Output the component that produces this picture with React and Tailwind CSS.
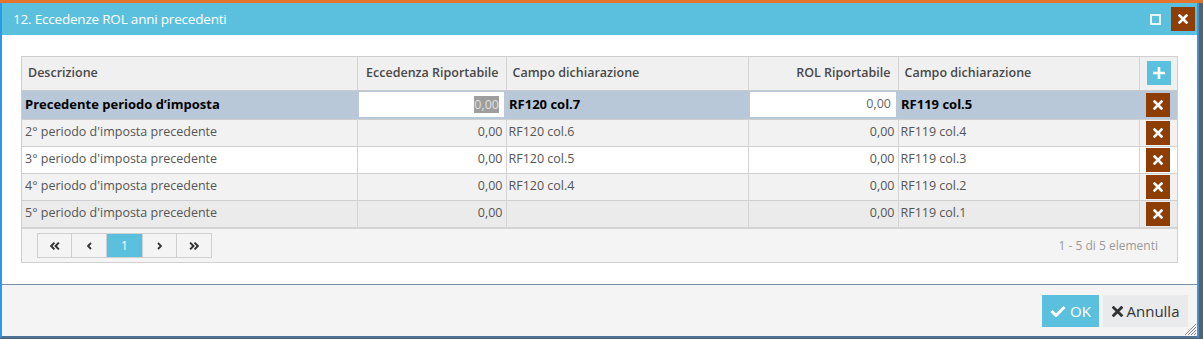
const rows = [
  { desc: "2° periodo d'imposta precedente", ecc: '0,00', c1: 'RF120 col.6', rol: '0,00', c2: 'RF119 col.4', bg: 'bg-[#f2f2f2]' },
  { desc: "3° periodo d'imposta precedente", ecc: '0,00', c1: 'RF120 col.5', rol: '0,00', c2: 'RF119 col.3', bg: 'bg-white' },
  { desc: "4° periodo d'imposta precedente", ecc: '0,00', c1: 'RF120 col.4', rol: '0,00', c2: 'RF119 col.2', bg: 'bg-[#f2f2f2]' },
  { desc: "5° periodo d'imposta precedente", ecc: '0,00', c1: '', rol: '0,00', c2: 'RF119 col.1', bg: 'bg-[#ebebeb]' },
];

function XIcon({ className = 'w-[10px] h-[10px]', color = 'white' }) {
  return (
    <svg viewBox="0 0 10 10" className={className}>
      <path d="M1.5 1.5 L8.5 8.5 M8.5 1.5 L1.5 8.5" stroke={color} strokeWidth="2.6" strokeLinecap="square" />
    </svg>
  );
}

function DelBtn() {
  return (
    <div className="w-6 h-6 bg-[#8e3d04] flex items-center justify-center mx-auto">
      <XIcon />
    </div>
  );
}

function Chevron({ dir, double }) {
  const one = dir === 'left' ? 'M4 0.5 L1 3.5 L4 6.5' : 'M1 0.5 L4 3.5 L1 6.5';
  const two = dir === 'left' ? 'M8 0.5 L5 3.5 L8 6.5' : 'M5 0.5 L8 3.5 L5 6.5';
  return (
    <svg viewBox={double ? '0 0 9 7' : '0 0 5 7'} className={double ? 'w-[10px] h-[8px]' : 'w-[5px] h-[8px]'}>
      <path d={one} stroke="#333" strokeWidth="1.8" fill="none" />
      {double && <path d={two} stroke="#333" strokeWidth="1.8" fill="none" />}
    </svg>
  );
}

export default function App() {
  return (
    <div className="w-[1203px] h-[339px] bg-[#4f6470] overflow-hidden font-['Open_Sans',sans-serif] relative">
      <div className="h-[3px] bg-[#e4732c]" />
      <div className="w-[1199px] h-[335px] flex flex-col border-l-2 border-r-2 border-b-2 border-l-[#2d97f0] border-r-[#4f8fc9] border-b-[#4e7396] bg-white relative">
        {/* title bar */}
        <div className="h-[32px] bg-[#5bc0de] flex items-center pl-[11px] pr-[2px] shrink-0">
          <span className="text-white text-[13.5px] tracking-[-0.2px] flex-1">12. Eccedenze ROL anni precedenti</span>
          <div className="w-[11px] h-[11px] border-2 border-[#e8f6fb] mr-[10px]" />
          <div className="w-6 h-6 bg-[#8e3d04] flex items-center justify-center">
            <XIcon />
          </div>
        </div>

        {/* body */}
        <div className="flex-1 pt-[21px] pl-[19px] pr-[19px]">
          <div className="border border-[#cfcfcf] w-[1157px]">
            <table className="table-fixed border-collapse w-full text-[12.5px] text-[#555]">
              <colgroup>
                <col className="w-[335px]" />
                <col className="w-[149px]" />
                <col className="w-[242px]" />
                <col className="w-[150px]" />
                <col className="w-[241px]" />
                <col className="w-[38px]" />
              </colgroup>
              <thead>
                <tr className="h-[33px] bg-[#f0f0f0] text-[#484848] text-[12.5px]">
                  <th className="text-left pl-[6px] border-r border-[#d4d4d4] font-semibold">Descrizione</th>
                  <th className="text-right pr-[7px] border-r border-[#d4d4d4] font-semibold">Eccedenza Riportabile</th>
                  <th className="text-left pl-[6px] border-r border-[#d4d4d4] font-semibold">Campo dichiarazione</th>
                  <th className="text-right pr-[7px] border-r border-[#d4d4d4] font-semibold">ROL Riportabile</th>
                  <th className="text-left pl-[6px] border-r border-[#d4d4d4] font-semibold">Campo dichiarazione</th>
                  <th>
                    <div className="w-6 h-6 bg-[#5bc0de] flex items-center justify-center ml-[7px]">
                      <svg viewBox="0 0 14 14" className="w-[14px] h-[14px]">
                        <path d="M7 1 V13 M1 7 H13" stroke="white" strokeWidth="2.6" />
                      </svg>
                    </div>
                  </th>
                </tr>
              </thead>
              <tbody>
                <tr className="h-[29px] bg-[#b8c8d8] text-black font-bold border-t border-[#c9c9c9]">
                  <td className="pl-[3px] text-[13px]">Precedente periodo d’imposta</td>
                  <td className="px-[2px]">
                    <div className="h-[25px] bg-white flex items-center justify-end pr-[5px] font-normal text-[#ccc]">
                      <span className="bg-[#9e9e9e] text-[#e0e0e0] leading-[17px]">0,00</span>
                    </div>
                  </td>
                  <td className="pl-[3px] text-[13px]">RF120 col.7</td>
                  <td className="px-[2px]">
                    <div className="h-[25px] bg-white flex items-center justify-end pr-[5px] font-normal text-[#666]">0,00</div>
                  </td>
                  <td className="pl-[3px] text-[13px]">RF119 col.5</td>
                  <td><DelBtn /></td>
                </tr>
                {rows.map((r, i) => (
                  <tr key={i} className={`h-[27px] ${r.bg} border-t border-[#cfcfcf]`}>
                    <td className="pl-[3px] border-r border-[#d4d4d4]">{r.desc}</td>
                    <td className="text-right pr-[3px] border-r border-[#d4d4d4]">{r.ecc}</td>
                    <td className="pl-[2px] border-r border-[#d4d4d4]">{r.c1}</td>
                    <td className="text-right pr-[3px] border-r border-[#d4d4d4]">{r.rol}</td>
                    <td className="pl-[2px] border-r border-[#d4d4d4]">{r.c2}</td>
                    <td><DelBtn /></td>
                  </tr>
                ))}
              </tbody>
            </table>
            {/* pager */}
            <div className="h-[35px] bg-[#f4f4f4] border-t-2 border-[#d4d4d4] flex items-center pl-[15px] pr-[19px]">
              <div className="flex border border-[#cfcfcf] h-[25px]">
                <div className="w-[34px] flex items-center justify-center border-r border-[#cfcfcf]"><Chevron dir="left" double /></div>
                <div className="w-[35px] flex items-center justify-center border-r border-[#cfcfcf]"><Chevron dir="left" /></div>
                <div className="w-[35px] flex items-center justify-center bg-[#5bc0de] text-white text-[12px]">1</div>
                <div className="w-[35px] flex items-center justify-center border-l border-r border-[#cfcfcf]"><Chevron dir="right" /></div>
                <div className="w-[34px] flex items-center justify-center"><Chevron dir="right" double /></div>
              </div>
              <div className="flex-1 text-right text-[12px] text-[#9a9a9a]">1 - 5 di 5 elementi</div>
            </div>
          </div>
        </div>

        {/* footer */}
        <div className="h-[52px] shrink-0 border-t border-[#7b8fa5] bg-[#f4f4f4] flex items-center justify-end gap-[4px] pr-[9px] pt-[1px]">
          <div className="h-8 w-[57px] bg-[#5bc0de] flex items-center justify-center gap-[4px] text-white text-[15px]">
            <svg viewBox="0 0 16 12" className="w-[16px] h-[12px]">
              <path d="M1.5 6 L6 10.5 L14.5 2" stroke="white" strokeWidth="3" fill="none" />
            </svg>
            <span>OK</span>
          </div>
          <div className="h-8 w-[85px] bg-[#e8eaec] flex items-center justify-center gap-[4px] text-[#333] text-[15px]">
            <XIcon className="w-[11px] h-[11px]" color="#333" />
            <span>Annulla</span>
          </div>
        </div>

        {/* resize grip */}
        <svg viewBox="0 0 12 12" className="absolute right-[1px] bottom-[1px] w-[12px] h-[12px]">
          <path d="M12 1 L1 12 M12 4 L4 12 M12 7 L7 12 M12 10 L10 12" stroke="#888" strokeWidth="1" />
        </svg>
      </div>
    </div>
  );
}
